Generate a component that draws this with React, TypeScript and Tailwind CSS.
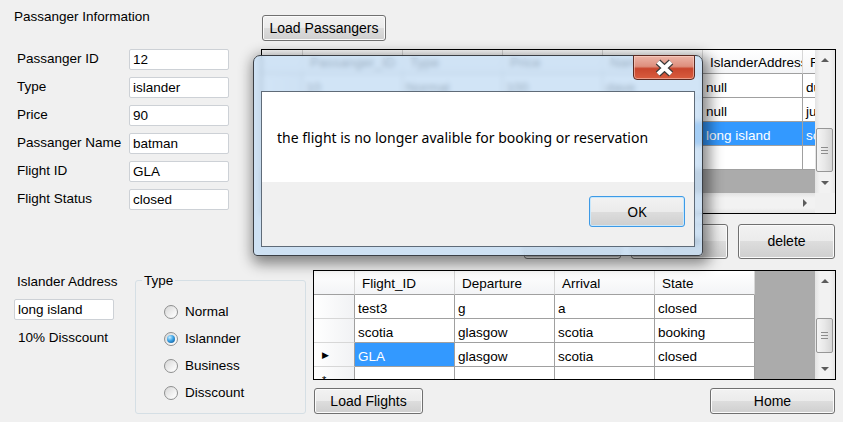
import React from "react";

const btn =
  "flex items-center justify-center rounded-[3px] border border-[#707070] bg-[linear-gradient(180deg,#f2f2f2_0%,#ebebeb_50%,#dddddd_50%,#cfcfcf_100%)] shadow-[inset_0_0_0_1px_#fbfbfb]";
const box = "flex h-[21px] w-[100px] items-center rounded-[2px] border border-[#cdd1d6] bg-white pl-[3px] pt-px";
const head = "flex h-[24px] shrink-0 items-center overflow-hidden whitespace-nowrap border-b border-r border-b-[#a0a0a0] border-r-[#d7d7d7] bg-[linear-gradient(180deg,#ffffff_0%,#f3f4f6_100%)] pl-[7px] pt-[3px]";
const cell = "flex h-[24px] shrink-0 items-center overflow-hidden whitespace-nowrap border-b border-r border-[#a0a0a0] pl-[3px] pt-[5px]";
const rowHead = "flex h-[24px] w-[41px] shrink-0 items-center border-b border-r border-b-[#d7d7d7] border-r-[#a0a0a0] bg-[linear-gradient(90deg,#ffffff_0%,#f1f2f4_100%)] pl-[8px] pt-[3px]";

const fields = [
  ["Passanger ID", "12"],
  ["Type", "islander"],
  ["Price", "90"],
  ["Passanger Name", "batman"],
  ["Flight ID", "GLA"],
  ["Flight Status", "closed"],
];

const passCols = ["Passanger_ID", "Type", "Price", "Name", "IslanderAddress", "Flight_ID"];
const passRows = [
  ["10", "Normal", "100", "dave", "null", "dundee"],
  ["11", "Business", "150", "john", "null", "jura"],
  ["12", "islander", "90", "batman", "long island", "scotia"],
];

const flightCols = ["Flight_ID", "Departure", "Arrival", "State"];
const flightRows = [
  ["test3", "g", "a", "closed"],
  ["scotia", "glasgow", "scotia", "booking"],
  ["GLA", "glasgow", "scotia", "closed"],
];

function Up() {
  return <span className="h-0 w-0 border-x-[4px] border-b-[4px] border-x-transparent border-b-[#5c5c5c]" />;
}
function Down() {
  return <span className="h-0 w-0 border-x-[4px] border-t-[4px] border-x-transparent border-t-[#5c5c5c]" />;
}

function Thumb({ h, mt }: { h: string; mt: string }) {
  return (
    <div
      className={`ml-px flex w-[17px] shrink-0 flex-col items-center justify-center gap-[2px] rounded-[2px] border border-[#979797] bg-[linear-gradient(90deg,#f4f4f4_0%,#e8e8e8_50%,#d6d6d6_100%)] ${h} ${mt}`}
    >
      <span className="h-px w-[7px] bg-[#8c8c8c]" />
      <span className="h-px w-[7px] bg-[#8c8c8c]" />
      <span className="h-px w-[7px] bg-[#8c8c8c]" />
    </div>
  );
}

function VScroll({ thumb }: { thumb: React.ReactNode }) {
  return (
    <div className="flex w-[20px] shrink-0 flex-col bg-[linear-gradient(90deg,#e3e3e3_0%,#f2f2f2_25%,#f2f2f2_75%,#e6e6e6_100%)]">
      <div className="flex h-[20px] shrink-0 items-center justify-center">
        <Up />
      </div>
      <div className="flex-1">{thumb}</div>
      <div className="flex h-[20px] shrink-0 items-center justify-center">
        <Down />
      </div>
    </div>
  );
}

function Radio({ label, checked }: { label: string; checked?: boolean }) {
  return (
    <div className="flex h-[27px] items-center">
      <span className="flex h-[14px] w-[14px] items-center justify-center rounded-full border border-[#8e8f8f] bg-[linear-gradient(135deg,#d6d6d6_0%,#f6f6f6_70%,#ffffff_100%)]">
        {checked && (
          <span className="h-[8px] w-[8px] rounded-full bg-[radial-gradient(circle_at_35%_30%,#c8eeff_0%,#3ba3e6_45%,#0b4a86_100%)]" />
        )}
      </span>
      <span className="ml-[7px] pt-px">{label}</span>
    </div>
  );
}

export default function App() {
  return (
    <div className="relative h-[422px] w-[843px] overflow-hidden bg-[#f0f0f0] font-['Liberation_Sans',Arial,sans-serif] text-[13.5px] text-black">
      {/* top half */}
      <div className="flex h-[262px]">
        <div className="w-[261px] shrink-0 pl-[14px] pt-[9px]">
          <p className="h-[16px] leading-[16px]">Passanger Information</p>
          <div className="mt-[24px] flex flex-col gap-[7px]">
            {fields.map(([label, value]) => (
              <div key={label} className="flex h-[21px] items-center">
                <span className="w-[115px] pl-[3px] whitespace-nowrap">{label}</span>
                <div className={box}>{value}</div>
              </div>
            ))}
          </div>
        </div>

        <div className="pt-[15px]">
          <button className={`${btn} ml-px h-[26px] w-[124px] text-[14px]`}>Load Passangers</button>

          <div className="mt-[8px] flex h-[165px] w-[575px] flex-col border border-black bg-white">
            <div className="flex h-[143px]">
              <div className="flex flex-1 flex-col overflow-hidden">
                <div className="flex">
                  <div className={`${head} w-[41px]`} />
                  {passCols.map((c) => (
                    <div key={c} className={`${head} w-[100px]`}>
                      {c}
                    </div>
                  ))}
                </div>
                {passRows.map((r, i) => {
                  const sel = i === 2;
                  return (
                    <div key={i} className="flex">
                      <div className={rowHead}>{sel ? <span className="text-[9px]">▶</span> : null}</div>
                      {r.map((v, j) => (
                        <div
                          key={j}
                          className={`${cell} w-[100px] ${sel ? "bg-[#3399ff] text-white" : "bg-white"}`}
                        >
                          {v}
                        </div>
                      ))}
                    </div>
                  );
                })}
                <div className="flex">
                  <div className={rowHead}>
                    <span className="text-[11px]">*</span>
                  </div>
                  {passCols.map((c) => (
                    <div key={c} className={`${cell} w-[100px] bg-white`} />
                  ))}
                </div>
                <div className="flex-1 bg-[#ababab]" />
              </div>
              <VScroll thumb={<Thumb h="h-[44px]" mt="mt-[58px]" />} />
            </div>
            <div className="flex h-[20px]">
              <div className="flex flex-1 items-center bg-[linear-gradient(180deg,#e3e3e3_0%,#f2f2f2_25%,#f2f2f2_75%,#e6e6e6_100%)]">
                <div className="flex h-full w-[20px] items-center justify-center">
                  <span className="h-0 w-0 border-y-[4px] border-r-[4px] border-y-transparent border-r-[#5c5c5c]" />
                </div>
                <div className="h-[17px] w-[300px] rounded-[2px] border border-[#979797] bg-[linear-gradient(180deg,#f4f4f4,#d6d6d6)]" />
                <div className="flex-1" />
                <div className="flex h-full w-[20px] items-center justify-center">
                  <span className="h-0 w-0 border-y-[4px] border-l-[4px] border-y-transparent border-l-[#5c5c5c]" />
                </div>
              </div>
              <div className="w-[20px] bg-[#f0f0f0]" />
            </div>
          </div>

          <div className="mt-[10px] flex w-[574px] justify-end gap-[10px]">
            <button className={`${btn} h-[35px] w-[97px] border-[#3c7fb1]`}>Book</button>
            <button className={`${btn} h-[35px] w-[97px]`}>update</button>
            <button className={`${btn} h-[35px] w-[97px] text-[14px]`}>delete</button>
          </div>
        </div>
      </div>

      {/* bottom half */}
      <div className="flex">
        <div className="flex w-[313px] shrink-0 pl-[14px]">
          <div className="w-[121px] shrink-0">
            <p className="mt-[12px] h-[16px] pl-[3px] leading-[16px]">Islander Address</p>
            <div className={`${box} mt-[9px]`}>long island</div>
            <p className="mt-[10px] h-[16px] pl-[4px] leading-[16px]">10% Disscount</p>
          </div>
          <div className="relative mt-[18px] h-[134px] w-[171px] rounded-[3px] border border-[#d5dfe5] pl-[28px] pt-[17px]">
            <span className="absolute -top-[9px] left-[6px] bg-[#f0f0f0] px-[2px] pt-px leading-[16px]">Type</span>
            <Radio label="Normal" />
            <Radio label="Islannder" checked />
            <Radio label="Business" />
            <Radio label="Disscount" />
          </div>
        </div>

        <div className="pt-[8px]">
          <div className="flex h-[110px] w-[523px] border border-black bg-[#ababab]">
            <div className="flex flex-1 overflow-hidden">
              <div className="flex w-[441px] shrink-0 flex-col">
                <div className="flex">
                  <div className={`${head} w-[41px]`} />
                  {flightCols.map((c) => (
                    <div key={c} className={`${head} w-[100px]`}>
                      {c}
                    </div>
                  ))}
                </div>
                {flightRows.map((r, i) => (
                  <div key={i} className="flex">
                    <div className={rowHead}>{i === 2 ? <span className="text-[9px]">▶</span> : null}</div>
                    {r.map((v, j) => (
                      <div
                        key={j}
                        className={`${cell} w-[100px] ${i === 2 && j === 0 ? "bg-[#3399ff] text-white" : "bg-white"}`}
                      >
                        {v}
                      </div>
                    ))}
                  </div>
                ))}
                <div className="flex">
                  <div className={rowHead}>
                    <span className="text-[11px]">*</span>
                  </div>
                  {flightCols.map((c) => (
                    <div key={c} className={`${cell} w-[100px] bg-white`} />
                  ))}
                </div>
              </div>
              <div className="flex-1" />
            </div>
            <VScroll thumb={<Thumb h="h-[35px]" mt="mt-[27px]" />} />
          </div>
          <div className="mt-[8px] flex w-[522px] justify-between pl-px">
            <button className={`${btn} h-[26px] w-[109px] text-[14px]`}>Load Flights</button>
            <button className={`${btn} h-[26px] w-[125px] text-[14px]`}>Home</button>
          </div>
        </div>
      </div>

      {/* message box over the form */}
      <div className="absolute left-[253px] top-[55px] flex h-[201px] w-[450px] flex-col rounded-t-[7px] rounded-b-[4px] border border-[#3b3f45] bg-[rgba(196,220,243,0.78)] shadow-[3px_4px_14px_4px_rgba(0,0,0,0.45)] backdrop-blur-[2.5px]">
        <div className="flex h-[35px] shrink-0 justify-end pr-[7px]">
          <div className="-mt-px flex h-[25px] w-[62px] items-center justify-center rounded-b-[4px] border border-[#5a2a22] bg-[linear-gradient(180deg,#ecb4a7_0%,#de8f7d_45%,#c9462d_55%,#d95d3f_100%)] shadow-[inset_0_0_0_1px_rgba(255,220,210,0.5)]">
            <svg width="21" height="18" viewBox="0 0 21 18">
              <path d="M4 3 L17 15 M17 3 L4 15" stroke="#3a3a3a" strokeWidth="6.5" />
              <path d="M4 3 L17 15 M17 3 L4 15" stroke="#ffffff" strokeWidth="4.2" />
            </svg>
          </div>
        </div>
        <div className="mx-[7px] mb-[8px] flex flex-1 flex-col border border-[#5f6b78] font-['Noto_Sans',sans-serif] text-[14px]">
          <div className="h-[90px] bg-white pl-[15px] pt-[36px] leading-[20px]">
            the flight is no longer avalible for booking or reservation
          </div>
          <div className="flex flex-1 justify-end bg-[#f0f0f0] pr-[9px] pt-[14px]">
            <button className="flex h-[31px] w-[96px] items-center justify-center rounded-[3px] border border-[#3d9ae6] bg-[linear-gradient(180deg,#f2f2f2_0%,#ebebeb_50%,#dddddd_50%,#cfcfcf_100%)] shadow-[inset_0_0_0_1px_#c9e8fc]">
              OK
            </button>
          </div>
        </div>
      </div>
    </div>
  );
}
